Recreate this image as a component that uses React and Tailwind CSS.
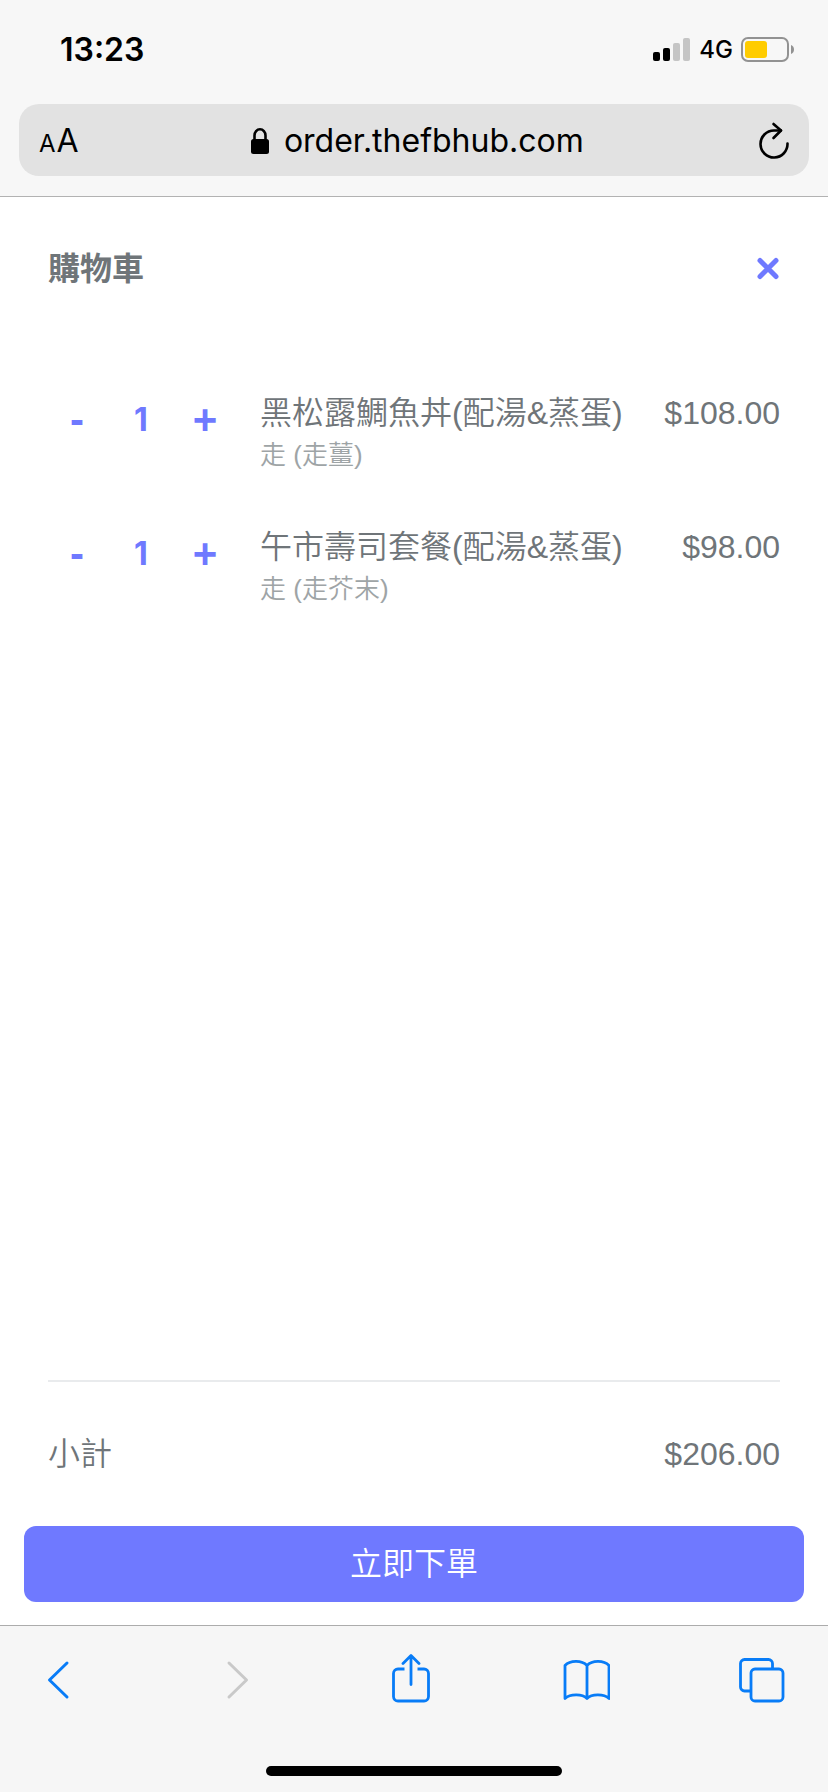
import React, { useState } from "react";

const initialItems = [
  { id: 1, name: "黑松露鯛魚丼(配湯&蒸蛋)", note: "走 (走薑)", price: 108, qty: 1 },
  { id: 2, name: "午市壽司套餐(配湯&蒸蛋)", note: "走 (走芥末)", price: 98, qty: 1 },
];

const money = (n) => `$${n.toFixed(2)}`;

function SignalIcon() {
  return (
    <svg width="38" height="24" viewBox="0 0 38 24">
      <rect x="0" y="14" width="7" height="9" rx="2" fill="#000" />
      <rect x="10" y="10" width="7" height="13" rx="2" fill="#000" />
      <rect x="20" y="5" width="7" height="18" rx="2" fill="#c5c5c5" />
      <rect x="30" y="0" width="7" height="23" rx="2" fill="#c5c5c5" />
    </svg>
  );
}

function BatteryIcon() {
  return (
    <svg width="54" height="26" viewBox="0 0 54 26">
      <rect x="1" y="1" width="46" height="23" rx="6" fill="none" stroke="#929292" strokeWidth="2" />
      <rect x="4" y="4" width="22" height="17" rx="3" fill="#ffcc00" />
      <path d="M50 8c2 .8 3 2.500 3 4.500s-1 3.700-3 4.500z" fill="#929292" />
    </svg>
  );
}

function StatusBar() {
  return (
    <div className="h-[104px] pb-1 pl-[60px] pr-[33px] flex items-center justify-between">
      <span className="text-[32px] leading-10 font-semibold">13:23</span>
      <div className="flex items-center">
        <SignalIcon />
        <span className="mx-2 text-2xl font-medium">4G</span>
        <BatteryIcon />
      </div>
    </div>
  );
}

function AddressBar() {
  return (
    <div className="mx-[19px] h-[72px] px-5 pt-[2px] rounded-[20px] bg-[#e2e2e2] flex items-center">
      <button type="button" aria-label="Text size" className="flex items-baseline gap-px leading-10">
        <span className="text-2xl">A</span>
        <span className="text-[32px]">A</span>
      </button>
      <div className="flex-1 flex items-center justify-center gap-[14px] pr-1">
        <svg width="20" height="28" viewBox="0 0 20 28">
          <rect x="1" y="12" width="18" height="15" rx="2.500" fill="#000" />
          <path d="M4.500 13V8.500a5.500 6.200 0 0 1 11 0V13" fill="none" stroke="#000" strokeWidth="2.600" />
        </svg>
        <input
          type="text"
          aria-label="Address"
          defaultValue="order.thefbhub.com"
          className="field-sizing-content bg-transparent text-[32px] leading-10 outline-none"
        />
      </div>
      <button type="button" aria-label="Reload">
        <svg width="30" height="38" viewBox="0 0 30 38" fill="none" stroke="#000" strokeWidth="2.600" strokeLinecap="round" strokeLinejoin="round">
          <path d="M28.500 21.500A13.500 13.500 0 1 1 15 8.500h7" />
          <path d="M14.500 2l7.500 6.500-7.500 7.500" />
        </svg>
      </button>
    </div>
  );
}

function CartItem({ item, onChange }) {
  return (
    <li className="flex items-start">
      <div className="w-[212px] shrink-0 mt-[11px] flex items-center leading-10 font-bold text-[#6f79ff]">
        <button type="button" aria-label="Decrease" className="w-[58px] text-[42px]" onClick={() => onChange(item.id, -1)}>-</button>
        <span className="w-[70px] text-center text-[32px] font-[Inter,sans-serif]">{item.qty}</span>
        <button type="button" aria-label="Increase" className="w-[58px] text-[42px]" onClick={() => onChange(item.id, 1)}>+</button>
      </div>
      <div className="flex-1">
        <p className="text-[32px] leading-[48px]">{item.name}</p>
        <p className="text-[26px] leading-9 text-[#9ea4a6]">{item.note}</p>
      </div>
      <span className="text-[32px] leading-[48px]">{money(item.price)}</span>
    </li>
  );
}

function ToolBar() {
  return (
    <nav className="h-[167px] border-t border-[#acacac] bg-[#f6f6f6] flex flex-col items-center justify-between pt-7 pb-4">
      <div className="w-full pl-[34px] pr-[42px] flex justify-between text-[#087cf7]">
        <button type="button" aria-label="Back">
          <svg width="48" height="50" viewBox="0 0 48 50" fill="none" stroke="currentColor" strokeWidth="3" strokeLinecap="round" strokeLinejoin="round">
            <path d="M33 9L15.500 26 33 43" />
          </svg>
        </button>
        <button type="button" aria-label="Forward" disabled className="text-[#c9c9c9]">
          <svg width="48" height="50" viewBox="0 0 48 50" fill="none" stroke="currentColor" strokeWidth="3" strokeLinecap="round" strokeLinejoin="round">
            <path d="M19 9l17.500 17L19 43" />
          </svg>
        </button>
        <button type="button" aria-label="Share">
          <svg width="48" height="50" viewBox="0 0 48 50" fill="none" stroke="currentColor" strokeWidth="2.800" strokeLinecap="round" strokeLinejoin="round">
            <path d="M25 30.500V1.800M17 9.500l8-8 8 8" />
            <path d="M18.500 15H12a4.500 4.500 0 0 0-4.500 4.500v23A4.500 4.500 0 0 0 12 47h26a4.500 4.500 0 0 0 4.500-4.500v-23A4.500 4.500 0 0 0 38 15h-6.500" strokeLinecap="butt" />
          </svg>
        </button>
        <button type="button" aria-label="Bookmarks">
          <svg width="48" height="50" viewBox="0 0 48 50" fill="none" stroke="currentColor" strokeWidth="2.800" strokeLinecap="round" strokeLinejoin="round">
            <path d="M25 11.500C20 6 8 6 3 11.500V44.500C8 40 20 39.500 25 44.500C30 39.500 42 40 47 44.500V11.500C42 6 30 6 25 11.500V44.500" />
          </svg>
        </button>
        <button type="button" aria-label="Tabs">
          <svg width="48" height="50" viewBox="0 0 48 50" fill="none" stroke="currentColor" strokeWidth="2.800">
            <rect x="13" y="15" width="32" height="32" rx="4" />
            <path d="M13 37H6.500a4 4 0 0 1-4-4V9.500a4 4 0 0 1 4-4h24a4 4 0 0 1 4 4V15" />
          </svg>
        </button>
      </div>
      <div className="w-[296px] h-[10px] rounded-full bg-black" />
    </nav>
  );
}

export default function App() {
  const [items, setItems] = useState(initialItems);

  const changeQty = (id, delta) => {
    setItems(items.map((i) => (i.id === id ? { ...i, qty: Math.max(0, i.qty + delta) } : i)));
  };

  const subtotal = items.reduce((sum, i) => sum + i.price * i.qty, 0);

  return (
    <div className="min-h-screen flex flex-col bg-white font-[Inter,sans-serif] text-black">
      <header className="bg-[#f7f7f7] border-b border-[#b2b2b2] pb-5">
        <StatusBar />
        <AddressBar />
      </header>

      <main lang="zh-HK" className="flex-1 flex flex-col font-[350] text-[#6f7579] font-['Liberation_Sans','Noto_Sans_CJK_TC',sans-serif]">
        <div className="px-12 pt-12 flex items-center justify-between">
          <h1 className="text-[32px] leading-[48px] font-bold">購物車</h1>
          <button type="button" aria-label="Close">
            <svg width="24" height="24" viewBox="0 0 24 24" fill="none" stroke="#6f79ff" strokeWidth="5" strokeLinecap="round">
              <path d="M4 3.500l16 16M20 3.500l-16 16" />
            </svg>
          </button>
        </div>

        <ul className="px-12 mt-24 flex flex-col gap-[50px]">
          {items.map((item) => (
            <CartItem key={item.id} item={item} onChange={changeQty} />
          ))}
        </ul>

        <div className="mt-auto px-6 pb-[23px]">
          <div className="mx-6 border-t-2 border-[#e9ebed] pt-12 pb-12 flex justify-between text-[32px] leading-[48px]">
            <span>小計</span>
            <span>{money(subtotal)}</span>
          </div>
          <button type="button" className="w-full h-[76px] rounded-xl bg-[#6f79ff] text-white text-[32px] leading-[48px]">
            立即下單
          </button>
        </div>
      </main>

      <ToolBar />
    </div>
  );
}
